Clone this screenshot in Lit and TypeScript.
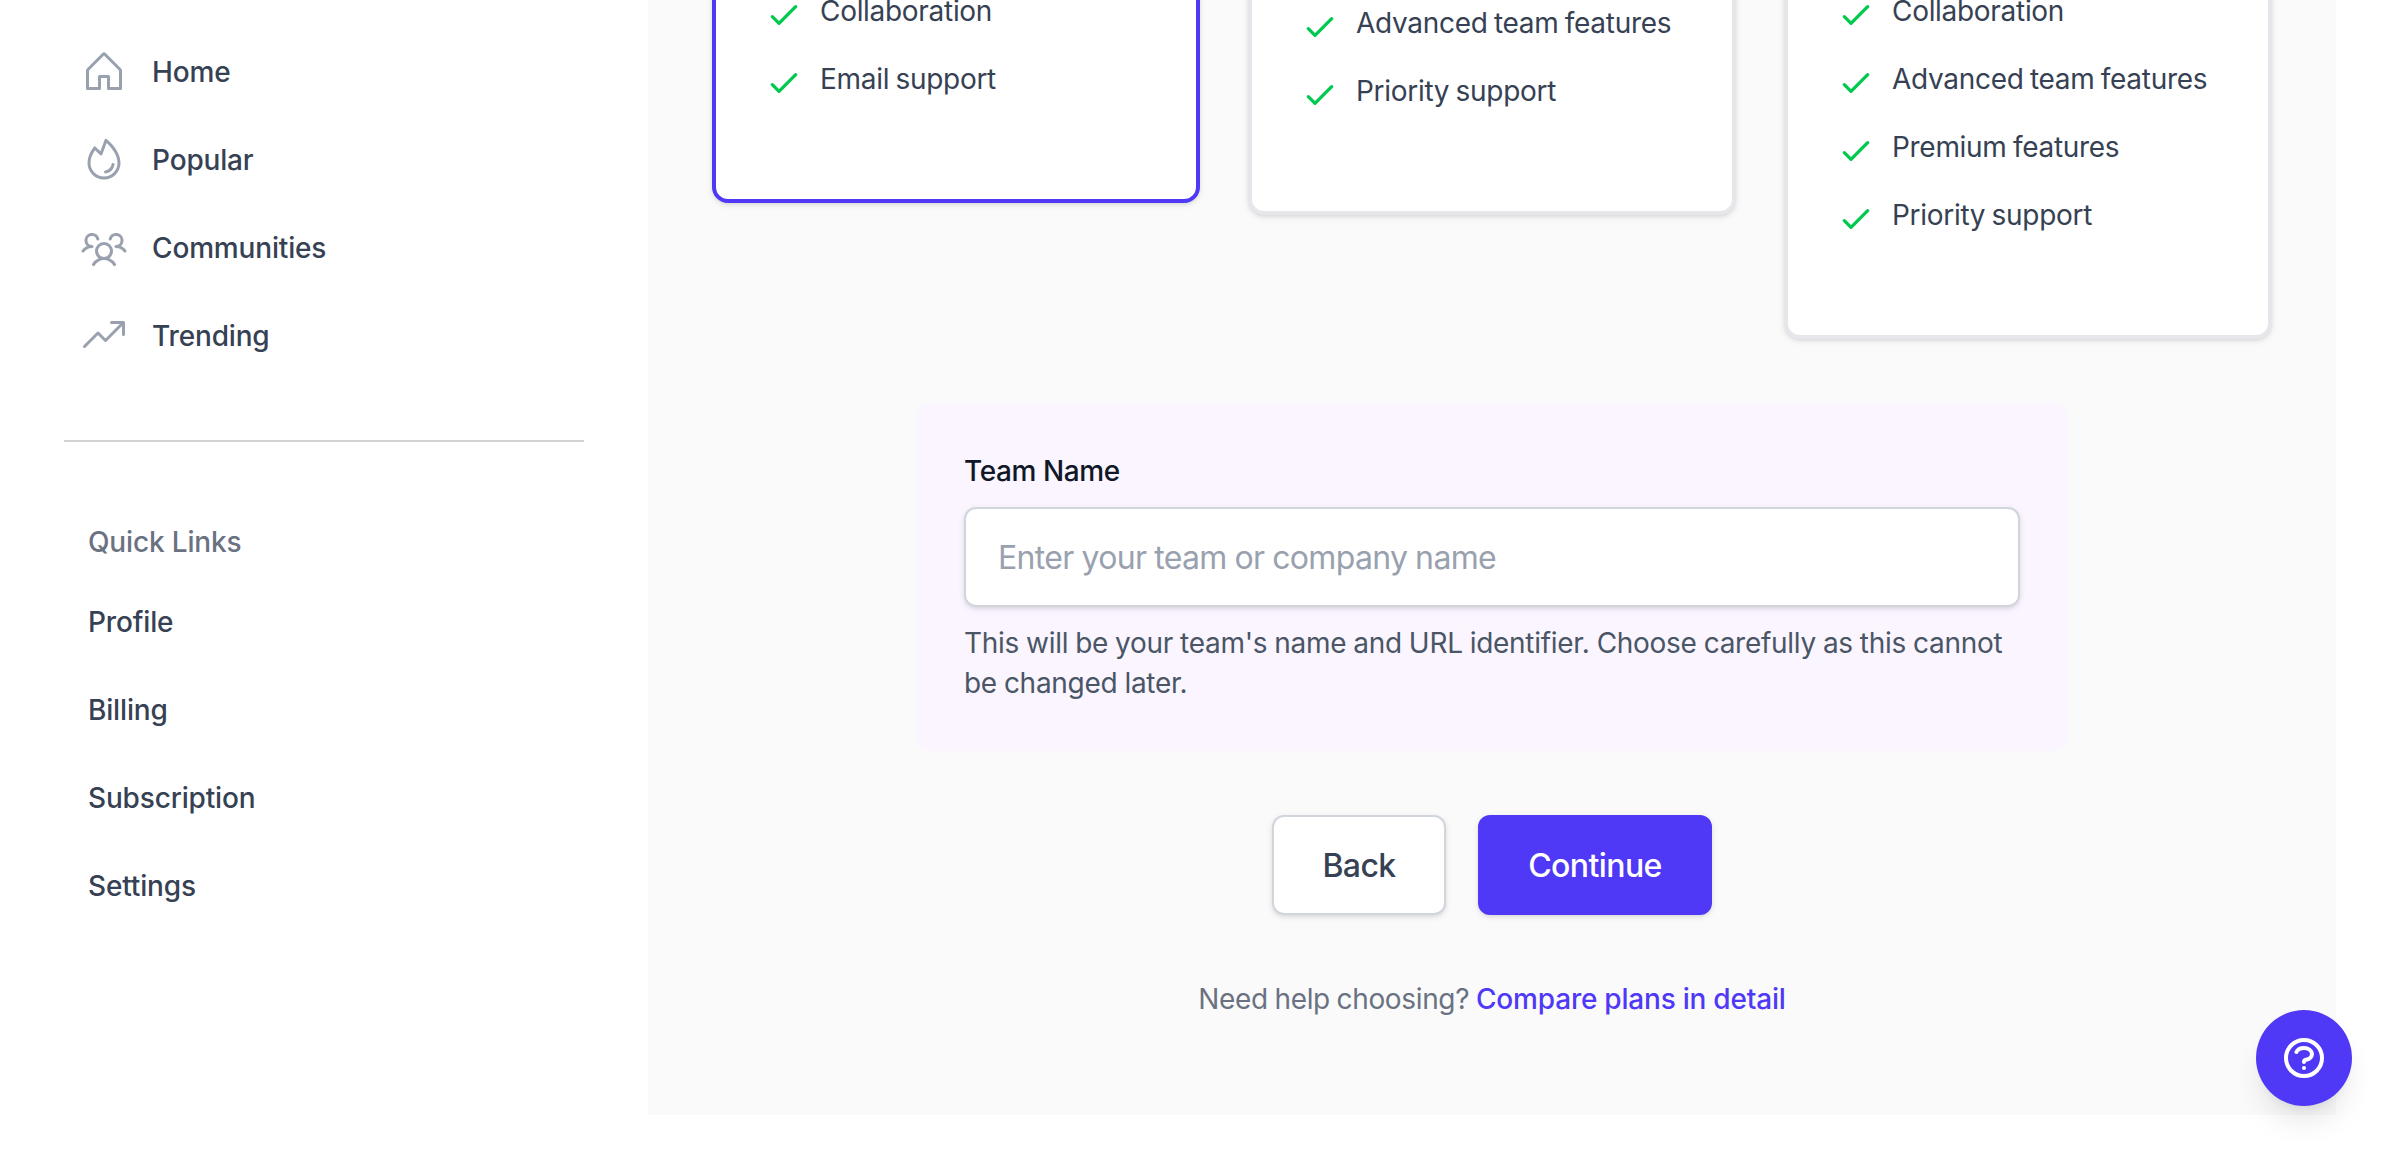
import { LitElement, html, css, svg } from "lit";
import { customElement, property } from "lit/decorators.js";
import { classMap } from "lit/directives/class-map.js";

const NAV_ICONS: Record<string, string[]> = {
  home: [
    "M219.31,108.68l-80-80a16,16,0,0,0-22.62,0l-80,80A15.87,15.87,0,0,0,32,120v96a8,8,0,0,0,8,8h64a8,8,0,0,0,8-8V160h32v56a8,8,0,0,0,8,8h64a8,8,0,0,0,8-8V120A15.87,15.87,0,0,0,219.31,108.68ZM208,208H160V152a8,8,0,0,0-8-8H104a8,8,0,0,0-8,8v56H48V120l80-80,80,80Z",
  ],
  popular: [
    "M143.38,17.85a8,8,0,0,0-12.63,3.41l-22,60.41L84.59,58.26a8,8,0,0,0-11.93.89C51,87.53,40,116.08,40,144a88,88,0,0,0,176,0C216,84.55,165.21,36,143.38,17.85ZM128,216a72.08,72.08,0,0,1-72-72c0-22,8.09-44.79,24.06-67.84l26.37,25.58a8,8,0,0,0,13.09-3l22.27-61.07C164.21,58.08,200,97.91,200,144A72.08,72.08,0,0,1,128,216Z",
    "M183.89,153.34a57.6,57.6,0,0,1-46.56,46.55A8.75,8.75,0,0,1,136,200a8,8,0,0,1-1.32-15.89c16.57-2.79,30.63-16.85,33.44-33.45a8,8,0,0,1,15.78,2.68Z",
  ],
  communities: [
    "M244.8,150.4a8,8,0,0,1-11.2-1.6A51.6,51.6,0,0,0,192,128a8,8,0,0,1-7.37-4.89,8,8,0,0,1,0-6.22A8,8,0,0,1,192,112a24,24,0,1,0-23.24-30,8,8,0,1,1-15.5-4A40,40,0,1,1,219,117.51a67.94,67.94,0,0,1,27.43,21.68A8,8,0,0,1,244.8,150.4ZM190.92,212a8,8,0,1,1-13.84,8,57,57,0,0,0-98.16,0,8,8,0,1,1-13.84-8,72.06,72.06,0,0,1,33.74-29.92,48,48,0,1,1,58.36,0A72.06,72.06,0,0,1,190.92,212ZM128,176a32,32,0,1,0-32-32A32,32,0,0,0,128,176ZM72,120a8,8,0,0,0-8-8A24,24,0,1,1,87.24,82a8,8,0,1,0,15.5-4A40,40,0,1,0,37,117.51,67.94,67.94,0,0,0,9.6,139.19a8,8,0,1,0,12.8,9.61A51.6,51.6,0,0,1,64,128,8,8,0,0,0,72,120Z",
  ],
  trending: [
    "M240,56v64a8,8,0,0,1-16,0V75.31l-82.34,82.35a8,8,0,0,1-11.32,0L96,123.31,29.66,189.66a8,8,0,0,1-11.32-11.32l72-72a8,8,0,0,1,11.32,0L136,140.69,212.69,64H168a8,8,0,0,1,0-16h64A8,8,0,0,1,240,56Z",
  ],
};

@customElement("side-bar")
class SideBar extends LitElement {
  static styles = css`
    :host {
      display: block;
      box-sizing: border-box;
      padding: 28px 64px 0;
      color: #364153;
      font-weight: 500;
      letter-spacing: -0.16px;
    }
    nav {
      display: flex;
      flex-direction: column;
    }
    .item {
      display: flex;
      align-items: center;
      gap: 24px;
      height: 88px;
      padding: 0 16px;
      line-height: 40px;
    }
    .icon {
      width: 48px;
      height: 48px;
      fill: #99a1af;
    }
    .rule {
      height: 2px;
      margin: 60px 0 80px;
      background: #d0d2d4;
    }
    .heading {
      padding: 0 24px;
      margin-bottom: 16px;
      line-height: 40px;
      color: #6a7282;
    }
    .link {
      height: 88px;
      padding: 0 24px;
      line-height: 88px;
    }
  `;

  private items = [
    ["home", "Home"],
    ["popular", "Popular"],
    ["communities", "Communities"],
    ["trending", "Trending"],
  ];
  private links = ["Profile", "Billing", "Subscription", "Settings"];

  render() {
    return html`
      <nav>
        ${this.items.map(
          ([key, label]) => html`
            <div class="item">
              <svg class="icon" viewBox="0 0 256 256">
                ${NAV_ICONS[key].map((d) => svg`<path d=${d} />`)}
              </svg>
              <span>${label}</span>
            </div>
          `
        )}
      </nav>
      <div class="rule"></div>
      <nav>
        <div class="heading">Quick Links</div>
        ${this.links.map((l) => html`<div class="link">${l}</div>`)}
      </nav>
    `;
  }
}

@customElement("plan-card")
class PlanCard extends LitElement {
  @property({ attribute: false }) features: string[] = [];
  @property({ type: Boolean }) selected = false;

  static styles = css`
    .card {
      box-sizing: border-box;
      padding: 60px 48px 96px;
      border: 4px solid #e5e7eb;
      border-radius: 16px;
      background: #fff;
      box-shadow: 0 2px 6px rgba(0, 0, 0, 0.1), 0 2px 4px -2px rgba(0, 0, 0, 0.1);
    }
    .selected {
      border-color: #4f39f6;
    }
    ul {
      display: flex;
      flex-direction: column;
      gap: 24px;
      margin: 0;
      padding: 0;
      list-style: none;
    }
    li {
      display: flex;
      gap: 16px;
      height: 44px;
      line-height: 40px;
      letter-spacing: -0.3px;
      word-spacing: -1.2px;
      color: #364153;
    }
    .check {
      width: 40px;
      height: 40px;
      margin-top: 4px;
      fill: none;
      stroke: #00c950;
      stroke-width: 2;
      stroke-linecap: round;
      stroke-linejoin: round;
    }
  `;

  render() {
    return html`
      <div class=${classMap({ card: true, selected: this.selected })}>
        <ul>
          ${this.features.map(
            (f) => html`
              <li>
                <svg class="check" viewBox="0 0 24 24"><path d="M5 13l4 4L19 7" /></svg>
                <span>${f}</span>
              </li>
            `
          )}
        </ul>
      </div>
    `;
  }
}

@customElement("app-root")
class AppRoot extends LitElement {
  static styles = css`
    :host {
      display: grid;
      grid-template-columns: 648px 1688px;
      position: relative;
      width: 2400px;
      height: 1154px;
      overflow: hidden;
      background: #fff;
      font-family: Inter, "Liberation Sans", sans-serif;
      font-size: 28px;
    }
    main {
      display: flex;
      flex-direction: column;
      align-items: center;
      box-sizing: border-box;
      height: 1115px;
      padding: 0 64px;
      background: #fafafb;
    }
    .plans {
      display: grid;
      grid-template-columns: repeat(3, 488px);
      align-items: start;
      gap: 48px;
      margin-top: -73px;
    }
    .plan-pro {
      margin-top: 12px;
    }
    .team {
      box-sizing: border-box;
      width: 1152px;
      margin-top: 64px;
      padding: 48px;
      border-radius: 16px;
      background: #faf5ff;
      line-height: 40px;
    }
    .label {
      display: block;
      margin-bottom: 16px;
      font-weight: 500;
      letter-spacing: -0.4px;
      color: #101828;
    }
    .input {
      display: block;
      box-sizing: border-box;
      width: 100%;
      height: 100px;
      padding: 0 32px;
      border: 2px solid #d1d5dc;
      border-radius: 12px;
      background: #fff;
      font: inherit;
      font-size: 32px;
      letter-spacing: -0.65px;
      word-spacing: -0.6px;
      box-shadow: 0 2px 6px rgba(0, 0, 0, 0.1), 0 2px 4px -2px rgba(0, 0, 0, 0.1);
    }
    .input::placeholder {
      color: #99a1af;
    }
    .hint {
      margin: 16px 0 0;
      letter-spacing: -0.28px;
      word-spacing: -0.6px;
      color: #4a5565;
    }
    .actions {
      display: flex;
      gap: 32px;
      margin-top: 64px;
    }
    .btn {
      box-sizing: border-box;
      height: 100px;
      padding: 0;
      border: 2px solid #d1d5dc;
      border-radius: 12px;
      background: #fff;
      color: #364153;
      font: 500 32px Inter, "Liberation Sans", sans-serif;
      letter-spacing: -0.58px;
      box-shadow: 0 2px 6px rgba(0, 0, 0, 0.1), 0 2px 4px -2px rgba(0, 0, 0, 0.1);
    }
    .back {
      width: 174px;
    }
    .continue {
      width: 234px;
      border-color: #4f39f6;
      background: #4f39f6;
      color: #fff;
    }
    .help {
      margin: 64px 0 0;
      line-height: 40px;
      letter-spacing: -0.35px;
      word-spacing: -0.8px;
      color: #6a7282;
    }
    .compare {
      font-weight: 500;
      letter-spacing: -0.16px;
      word-spacing: -0.3px;
      color: #4f39f6;
    }
    .fab {
      position: absolute;
      right: 48px;
      bottom: 48px;
      display: grid;
      place-items: center;
      width: 96px;
      height: 96px;
      border-radius: 50%;
      background: #4f39f6;
      box-shadow: 0 20px 30px -6px rgba(0, 0, 0, 0.1), 0 8px 12px -8px rgba(0, 0, 0, 0.1);
    }
    .fab svg {
      width: 48px;
      height: 48px;
      fill: none;
      stroke: #fff;
      stroke-width: 2;
      stroke-linecap: round;
      stroke-linejoin: round;
    }
  `;

  render() {
    return html`
      <side-bar></side-bar>
      <main>
        <section class="plans">
          <plan-card selected .features=${["Collaboration", "Email support"]}></plan-card>
          <plan-card
            class="plan-pro"
            .features=${["Advanced team features", "Priority support"]}
          ></plan-card>
          <plan-card
            .features=${["Collaboration", "Advanced team features", "Premium features", "Priority support"]}
          ></plan-card>
        </section>
        <section class="team">
          <label class="label" for="team-name">Team Name</label>
          <input class="input" id="team-name" placeholder="Enter your team or company name" />
          <p class="hint">
            This will be your team's name and URL identifier. Choose carefully as this cannot be
            changed later.
          </p>
        </section>
        <div class="actions">
          <button class="btn back">Back</button>
          <button class="btn continue">Continue</button>
        </div>
        <p class="help">Need help choosing? <span class="compare">Compare plans in detail</span></p>
      </main>
      <div class="fab">
        <svg viewBox="0 0 24 24">
          <path
            d="M8.228 9c.549-1.165 2.03-2 3.772-2 2.21 0 4 1.343 4 3 0 1.4-1.278 2.575-3.006 2.907-.542.104-.994.54-.994 1.093m0 3h.01M21 12a9 9 0 11-18 0 9 9 0 0118 0z"
          />
        </svg>
      </div>
    `;
  }
}
